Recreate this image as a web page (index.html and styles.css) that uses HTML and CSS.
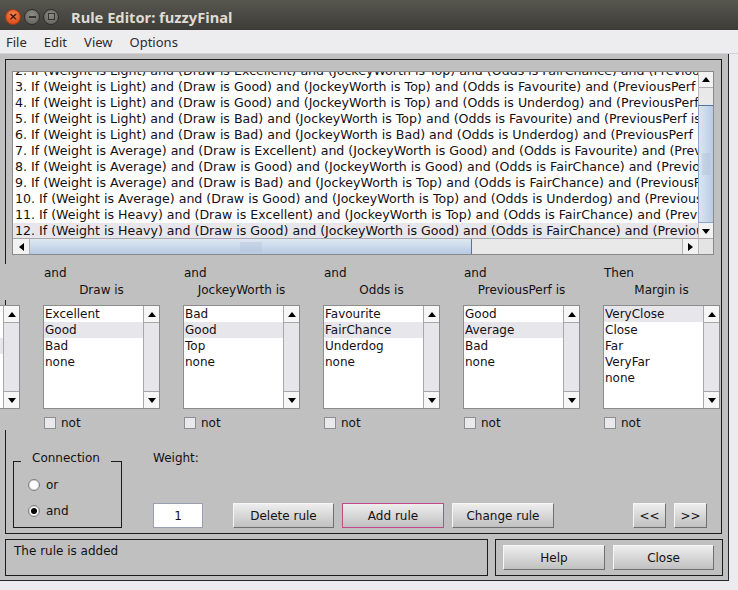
FILE: index.html
```html
<!DOCTYPE html>
<html>
<head>
<meta charset="utf-8">
<link rel="stylesheet" href="styles.css">
</head>
<body>
<div class="titlebar">
  <div class="tb-btns">
    <span class="tb tb-close">&#215;</span>
    <span class="tb tb-min"><span class="min-bar"></span></span>
    <span class="tb tb-max"><span class="max-box"></span></span>
  </div>
  <span class="title">Rule Editor: fuzzyFinal</span>
</div>
<div class="menubar">
  <span>File</span><span>Edit</span><span>View</span><span>Options</span>
</div>
<div class="window">
  <div class="frame">
    <div class="rulelist">
      <div class="rl-view">
        <div class="rl-rows">
          <div class="row">2. If (Weight is Light) and (Draw is Excellent) and (JockeyWorth is Top) and (Odds is FairChance) and (PreviousPerf is Good) then (Margin is VeryClose) (1)</div>
          <div class="row">3. If (Weight is Light) and (Draw is Good) and (JockeyWorth is Top) and (Odds is Favourite) and (PreviousPerf is Good) then (Margin is VeryClose) (1)</div>
          <div class="row">4. If (Weight is Light) and (Draw is Good) and (JockeyWorth is Top) and (Odds is Underdog) and (PreviousPerf is Average) then (Margin is Close) (1)</div>
          <div class="row">5. If (Weight is Light) and (Draw is Bad) and (JockeyWorth is Top) and (Odds is Favourite) and (PreviousPerf is Good) then (Margin is Close) (1)</div>
          <div class="row">6. If (Weight is Light) and (Draw is Bad) and (JockeyWorth is Bad) and (Odds is Underdog) and (PreviousPerf is Bad) then (Margin is VeryFar) (1)</div>
          <div class="row">7. If (Weight is Average) and (Draw is Excellent) and (JockeyWorth is Good) and (Odds is Favourite) and (PreviousPerf is Good) then (Margin is VeryClose) (1)</div>
          <div class="row">8. If (Weight is Average) and (Draw is Good) and (JockeyWorth is Good) and (Odds is FairChance) and (PreviousPerf is Average) then (Margin is Close) (1)</div>
          <div class="row">9. If (Weight is Average) and (Draw is Bad) and (JockeyWorth is Top) and (Odds is FairChance) and (PreviousPerf is Average) then (Margin is Far) (1)</div>
          <div class="row">10. If (Weight is Average) and (Draw is Good) and (JockeyWorth is Top) and (Odds is Underdog) and (PreviousPerf is Good) then (Margin is Close) (1)</div>
          <div class="row">11. If (Weight is Heavy) and (Draw is Excellent) and (JockeyWorth is Top) and (Odds is FairChance) and (PreviousPerf is Good) then (Margin is Close) (1)</div>
          <div class="row sel">12. If (Weight is Heavy) and (Draw is Good) and (JockeyWorth is Good) and (Odds is FairChance) and (PreviousPerf is Average) then (Margin is VeryClose) (1)</div>
        </div>
      </div>
      <div class="vscroll">
        <div class="arrow-btn"><span class="tri-up"></span></div>
        <div class="v-track"></div>
        <div class="v-thumb"><span class="grip grip-v"></span></div>
        <div class="arrow-btn"><span class="tri-down"></span></div>
      </div>
      <div class="hscroll">
        <div class="harrow-btn h-left"><span class="tri-left"></span></div>
        <div class="h-thumb"><span class="grip grip-h"></span></div>
        <div class="h-track"></div>
        <div class="harrow-btn h-right"><span class="tri-right"></span></div>
      </div>
      <div class="corner"></div>
    </div>

    <div class="cols">
      <div class="col">
        <div class="col-labels"><div class="lab1">If</div><div class="lab2">Weight is</div></div>
        <div class="lb">
          <div class="lb-items"><div class="item">Light</div><div class="item">Average</div><div class="item sel">Heavy</div><div class="item">none</div></div>
          <div class="lb-scroll"><div class="sb-btn"><span class="tri-up"></span></div><div class="sb-thumb"></div><div class="sb-btn"><span class="tri-down"></span></div></div>
        </div>
        <div class="chk-row"><span class="chk"></span><span>not</span></div>
      </div>
      <div class="col">
        <div class="col-labels"><div class="lab1">and</div><div class="lab2">Draw is</div></div>
        <div class="lb">
          <div class="lb-items"><div class="item">Excellent</div><div class="item sel">Good</div><div class="item">Bad</div><div class="item">none</div></div>
          <div class="lb-scroll"><div class="sb-btn"><span class="tri-up"></span></div><div class="sb-thumb"></div><div class="sb-btn"><span class="tri-down"></span></div></div>
        </div>
        <div class="chk-row"><span class="chk"></span><span>not</span></div>
      </div>
      <div class="col">
        <div class="col-labels"><div class="lab1">and</div><div class="lab2">JockeyWorth is</div></div>
        <div class="lb">
          <div class="lb-items"><div class="item">Bad</div><div class="item sel">Good</div><div class="item">Top</div><div class="item">none</div></div>
          <div class="lb-scroll"><div class="sb-btn"><span class="tri-up"></span></div><div class="sb-thumb"></div><div class="sb-btn"><span class="tri-down"></span></div></div>
        </div>
        <div class="chk-row"><span class="chk"></span><span>not</span></div>
      </div>
      <div class="col">
        <div class="col-labels"><div class="lab1">and</div><div class="lab2">Odds is</div></div>
        <div class="lb">
          <div class="lb-items"><div class="item">Favourite</div><div class="item sel">FairChance</div><div class="item">Underdog</div><div class="item">none</div></div>
          <div class="lb-scroll"><div class="sb-btn"><span class="tri-up"></span></div><div class="sb-thumb"></div><div class="sb-btn"><span class="tri-down"></span></div></div>
        </div>
        <div class="chk-row"><span class="chk"></span><span>not</span></div>
      </div>
      <div class="col">
        <div class="col-labels"><div class="lab1">and</div><div class="lab2">PreviousPerf is</div></div>
        <div class="lb">
          <div class="lb-items"><div class="item">Good</div><div class="item sel">Average</div><div class="item">Bad</div><div class="item">none</div></div>
          <div class="lb-scroll"><div class="sb-btn"><span class="tri-up"></span></div><div class="sb-thumb"></div><div class="sb-btn"><span class="tri-down"></span></div></div>
        </div>
        <div class="chk-row"><span class="chk"></span><span>not</span></div>
      </div>
      <div class="col">
        <div class="col-labels"><div class="lab1">Then</div><div class="lab2">Margin is</div></div>
        <div class="lb">
          <div class="lb-items"><div class="item sel">VeryClose</div><div class="item">Close</div><div class="item">Far</div><div class="item">VeryFar</div><div class="item">none</div></div>
          <div class="lb-scroll"><div class="sb-btn"><span class="tri-up"></span></div><div class="sb-thumb"></div><div class="sb-btn"><span class="tri-down"></span></div></div>
        </div>
        <div class="chk-row"><span class="chk"></span><span>not</span></div>
      </div>
    </div>

    <div class="lower">
      <fieldset class="conn">
        <legend>Connection</legend>
        <div class="radios">
          <div class="radio-row"><span class="radio"></span><span>or</span></div>
          <div class="radio-row"><span class="radio on"></span><span>and</span></div>
        </div>
      </fieldset>
      <div class="wcol">
        <div class="wlabel">Weight:</div>
        <div class="btnrow">
          <div class="edit">1</div>
          <div class="btn b-delete">Delete rule</div>
          <div class="btn b-add focus">Add rule</div>
          <div class="btn b-change">Change rule</div>
          <div class="btn b-prev">&lt;&lt;</div>
          <div class="btn b-next">&gt;&gt;</div>
        </div>
      </div>
    </div>
  </div>

  <div class="bottom">
    <div class="status">The rule is added</div>
    <div class="helpbox">
      <div class="btn b-help">Help</div>
      <div class="btn b-close">Close</div>
    </div>
  </div>
</div>
</body>
</html>
```
FILE: styles.css
```css
* { box-sizing: border-box; }
html, body { margin: 0; padding: 0; }
body {
  width: 738px;
  height: 590px;
  overflow: hidden;
  background: #ecebef;
  font-family: "DejaVu Sans", sans-serif;
  font-size: 12px;
  color: #141014;
}

/* title bar */
.titlebar {
  height: 30px;
  padding-top: 3px;
  background: linear-gradient(#57564f, #3d3c38);
  display: flex;
  align-items: center;
}
.tb-btns { display: flex; gap: 3px; margin-left: 5px; }
.tb {
  width: 16px; height: 16px; border-radius: 50%;
  display: flex; align-items: center; justify-content: center;
}
.tb-close {
  background: radial-gradient(circle at 50% 35%, #f5885a, #e0501c 70%);
  border: 1px solid #9e3d15;
  color: #3a1406;
  font-family: "DejaVu Sans", sans-serif;
  font-size: 11px;
  line-height: 1;
  font-weight: bold;
}
.tb-min, .tb-max {
  background: radial-gradient(circle at 50% 35%, #8e8d87, #6a6964 70%);
  border: 1px solid #2f2e2b;
}
.min-bar { width: 7px; height: 2px; background: #35342f; }
.max-box { width: 7px; height: 7px; border: 1px solid #35342f; }
.title {
  margin-left: 12px;
  color: #dfdbd2;
  font-family: "Noto Sans", sans-serif;
  font-weight: bold;
  font-size: 14.7px;
}

/* menu */
.menubar {
  height: 24px;
  border-bottom: 1px solid #d2d1d4;
  background: #edecef;
  display: flex;
  align-items: center;
  gap: 17px;
  padding-left: 6px;
  font-family: "Noto Sans", sans-serif;
  font-size: 13px;
  color: #2e2a2e;
}

/* window */
.window {
  width: 729px;
  height: 527px;
  background: #c0c0c0;
  border-right: 1px solid #262626;
  border-bottom: 1px solid #262626;
  padding-top: 5px;
  overflow: hidden;
}
.frame {
  margin-left: 5px;
  width: 717px;
  height: 475px;
  border: 1px solid #1c1c1c;
}

/* rule list */
.rulelist {
  margin: 11px 0 0 6px;
  width: 702px;
  height: 184px;
  border: 1px solid #8a8a8a;
  background: #fff;
  display: grid;
  grid-template-columns: 685px 15px;
  grid-template-rows: 166px 16px;
}
.rl-view { overflow: hidden; }
.rl-rows { margin-top: -9px; }
.row {
  height: 16px;
  line-height: 16px;
  padding-left: 2px;
  white-space: nowrap;
  font-size: 12.6px;
}
.row.sel { background: #e7e6eb; }

.vscroll { display: flex; flex-direction: column; background: #eaeaea; }
.arrow-btn {
  height: 16px; flex: none;
  background: #f2f2f2;
  border-left: 1px solid #b9b9b9;
  display: flex; align-items: center; justify-content: center;
}
.arrow-btn:first-child { border-bottom: 1px solid #b0b0b0; }
.v-track { height: 17px; flex: none; background: #e9e9e9; border-left: 1px solid #b9b9b9; }
.v-thumb {
  height: 118px; flex: none;
  background: linear-gradient(to right, #dbe5f1, #b8cce4);
  border-top: 1px solid #4e75ab;
  border-left: 1px solid #8ea6c8;
  border-bottom: 1px solid #8ea6c8;
  display: flex; align-items: center; justify-content: center;
}
.hscroll {
  display: flex;
  border-top: 1px solid #a9a9a9;
  background: #e9e9e9;
}
.harrow-btn {
  flex: none;
  background: #f2f2f2;
  display: flex; align-items: center; justify-content: center;
}
.h-left { width: 17px; border-right: 1px solid #b0b0b0; }
.h-right { width: 16px; border-left: 1px solid #b0b0b0; }
.h-thumb {
  width: 442px; flex: none;
  background: linear-gradient(#dfe8f3, #b7cbe4);
  border-right: 1px solid #4e75ab;
  display: flex; align-items: center; justify-content: center;
}
.h-track { flex: 1; }
.corner { background: #e4e4e4; border-top: 1px solid #a9a9a9; border-left: 1px solid #b9b9b9; }
.grip {
  background-image: radial-gradient(circle, #aabbd2 0.5px, transparent 0.8px);
  background-size: 2px 2px;
}
.grip-h { width: 22px; height: 10px; }
.grip-v { width: 8px; height: 22px; }

.tri-up { width: 0; height: 0; border-left: 4px solid transparent; border-right: 4px solid transparent; border-bottom: 5px solid #000; }
.tri-down { width: 0; height: 0; border-left: 4px solid transparent; border-right: 4px solid transparent; border-top: 5px solid #000; }
.tri-left { width: 0; height: 0; border-top: 4px solid transparent; border-bottom: 4px solid transparent; border-right: 5px solid #000; }
.tri-right { width: 0; height: 0; border-top: 4px solid transparent; border-bottom: 4px solid transparent; border-left: 5px solid #000; }

/* columns */
.cols {
  display: flex;
  gap: 23px;
  margin: 9px 0 0 -103px;
}
.col { width: 117px; flex: none; }
.col-labels {
  height: 36px;
  padding-top: 1px;
  background: #c0c0c0;
  line-height: 17px;
  white-space: nowrap;
}
.lab1 { padding-left: 1px; }
.lab2 { text-align: center; }
.lb {
  margin-top: 5px;
  height: 104px;
  border: 1px solid #8c8c8c;
  background: #fff;
  display: grid;
  grid-template-columns: 1fr 16px;
}
.lb-items { overflow: hidden; }
.item {
  height: 16px;
  line-height: 16px;
  padding-left: 1px;
  white-space: nowrap;
}
.item.sel { background: #e7e6eb; }
.lb-scroll {
  display: flex;
  flex-direction: column;
  border-left: 1px solid #a8a8a8;
  background: #f4f4f4;
}
.sb-btn {
  height: 16px; flex: none;
  display: flex; align-items: center; justify-content: center;
  background: #f6f6f6;
}
.sb-thumb {
  flex: 1;
  background: #e6e6ea;
  border: 1px solid #a8a8a8;
  border-left: none;
  border-right: none;
}
.chk-row {
  height: 21px;
  background: #c0c0c0;
  padding-top: 8px;
  display: flex;
  align-items: flex-start;
  gap: 5px;
  line-height: 12px;
}
.chk {
  margin-left: 1px;
  width: 12px; height: 12px;
  border: 1px solid #8e8e8e;
  background: #e9e8ed;
}

/* lower area */
.lower {
  display: flex;
  align-items: flex-start;
  margin-top: 20px;
}
.conn {
  margin: 0 0 0 7px;
  padding: 0;
  width: 109px;
  min-width: 0;
  border: 1px solid #1c1c1c;
}
.conn legend {
  margin-left: 7px;
  padding: 0 11px 6px;
  line-height: 16px;
}
.radios { padding: 0 0 3px 14px; }
.radio-row {
  height: 26px;
  display: flex;
  align-items: center;
  gap: 6px;
}
.radio {
  width: 12px; height: 12px;
  border-radius: 50%;
  border: 1px solid #7c7c7c;
  background: #fff;
  box-shadow: inset 0 0 0 1px #d6d6d6;
  display: flex; align-items: center; justify-content: center;
}
.radio.on::after {
  content: "";
  width: 6px; height: 6px;
  border-radius: 50%;
  background: #000;
}
.wcol { margin-left: 31px; }
.wlabel { line-height: 16px; }
.btnrow {
  margin-top: 37px;
  display: flex;
}
.edit {
  width: 50px; height: 25px;
  background: #fff;
  border: 1px solid #9aa0b2;
  display: flex; align-items: center; justify-content: center;
}
.btn {
  height: 25px;
  border: 1px solid;
  border-color: #f6f6f6 #6f6f6f #6f6f6f #f6f6f6;
  background: linear-gradient(#eeeeee, #c0c0c0);
  display: flex; align-items: center; justify-content: center;
  white-space: nowrap;
}
.btn.focus { border: 1px solid #c24a88; }
.b-delete { width: 101px; margin-left: 30px; }
.b-add { width: 102px; margin-left: 8px; }
.b-change { width: 102px; margin-left: 8px; }
.b-prev { width: 33px; margin-left: 79px; }
.b-next { width: 33px; margin-left: 8px; }

/* bottom */
.bottom {
  display: flex;
  gap: 7px;
  margin: 5px 0 0 5px;
}
.status {
  width: 483px; height: 37px;
  border: 1px solid #1c1c1c;
  padding: 3px 0 0 8px;
  line-height: 16px;
}
.helpbox {
  width: 228px; height: 37px;
  border: 1px solid #1c1c1c;
  padding: 5px 0 0 7px;
  display: flex;
  gap: 8px;
}
.b-help { width: 102px; }
.b-close { width: 101px; }
```
